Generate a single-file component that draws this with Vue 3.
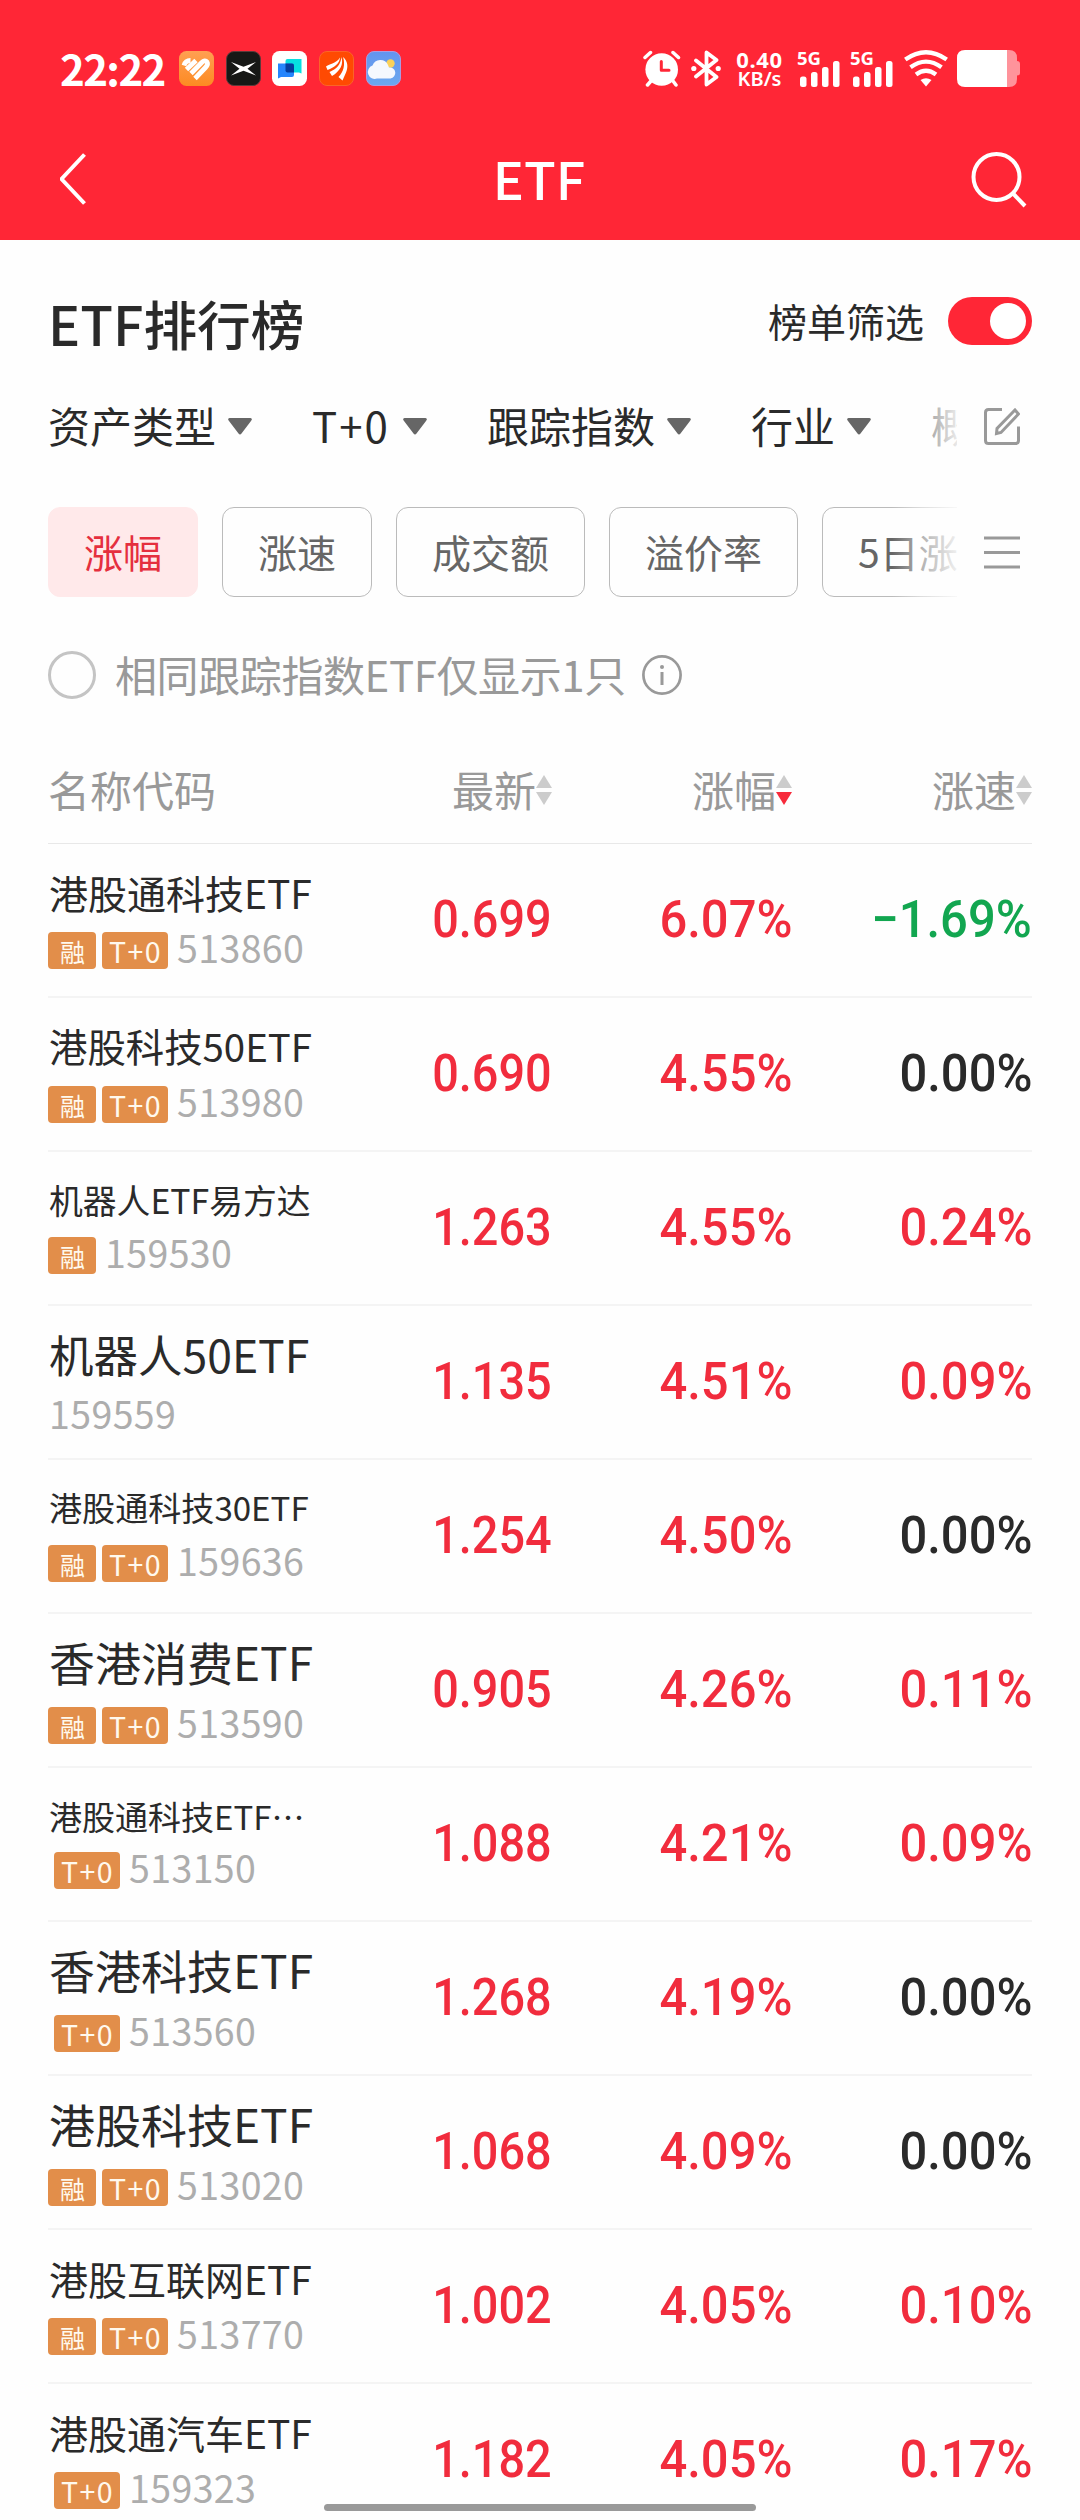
<script setup>
const filters = ['资产类型', 'T+0', '跟踪指数', '行业', '概念']
const chips = ['涨幅', '涨速', '成交额', '溢价率', '5日涨幅']
const columns = [
  { label: '最新', sort: '' },
  { label: '涨幅', sort: 'desc' },
  { label: '涨速', sort: '' },
]
const rows = [
  { name: '港股通科技ETF', size: 39, margin: true, t0: true, code: '513860', price: '0.699', change: '6.07%', speed: '−1.69%' },
  { name: '港股科技50ETF', size: 38.4, margin: true, t0: true, code: '513980', price: '0.690', change: '4.55%', speed: '0.00%' },
  { name: '机器人ETF易方达', size: 33.8, margin: true, t0: false, code: '159530', price: '1.263', change: '4.55%', speed: '0.24%' },
  { name: '机器人50ETF', size: 44.5, margin: false, t0: false, code: '159559', price: '1.135', change: '4.51%', speed: '0.09%' },
  { name: '港股通科技30ETF', size: 33.1, margin: true, t0: true, code: '159636', price: '1.254', change: '4.50%', speed: '0.00%' },
  { name: '香港消费ETF', size: 46, margin: true, t0: true, code: '513590', price: '0.905', change: '4.26%', speed: '0.11%' },
  { name: '港股通科技ETF…', size: 33, margin: false, t0: true, code: '513150', price: '1.088', change: '4.21%', speed: '0.09%' },
  { name: '香港科技ETF', size: 46, margin: false, t0: true, code: '513560', price: '1.268', change: '4.19%', speed: '0.00%' },
  { name: '港股科技ETF', size: 46, margin: true, t0: true, code: '513020', price: '1.068', change: '4.09%', speed: '0.00%' },
  { name: '港股互联网ETF', size: 39, margin: true, t0: true, code: '513770', price: '1.002', change: '4.05%', speed: '0.10%' },
  { name: '港股通汽车ETF', size: 39, margin: false, t0: true, code: '159323', price: '1.182', change: '4.05%', speed: '0.17%' },
]
const tone = (v) => (v.startsWith('−') ? 'down' : v === '0.00%' ? 'flat' : 'up')
</script>

<template>
  <div class="page" lang="zh-CN">
    <header class="top">
      <div class="status">
        <span class="time">22:22</span>
        <div class="apps">
          <svg viewBox="0 0 35 35">
            <defs><linearGradient id="ga" x2="0" y2="1"><stop stop-color="#ffa052" /><stop offset="1" stop-color="#fd8a22" /></linearGradient></defs>
            <rect width="35" height="35" rx="7.5" fill="url(#ga)" />
            <g stroke="#fff" stroke-width="4.8" stroke-linecap="butt" fill="none">
              <path d="M5 14.500Q6.500 9.500 11.500 9.500" /><path d="M7.500 18.500 17 9.500" />
              <path d="M12 22.500 22.500 11.800Q26 8.500 28 11 29.500 13.300 26.500 16.500L16 27.500" />
            </g>
          </svg>
          <svg viewBox="0 0 35 35">
            <rect x=".5" y=".5" width="34" height="34" rx="7.5" fill="#171816" stroke="#5c3a3b" />
            <path d="M5 11 17.500 15.800 30 11 21.500 17.800 30 24.500 17.500 19.800 5 24.500 13.500 17.800Z" fill="#fff" />
          </svg>
          <svg viewBox="0 0 35 35">
            <rect width="35" height="35" rx="7.5" fill="#fff" />
            <path d="M15.500 8H29.500V22.500L27 21.500H15.500Q13.500 21.500 13.500 19.500V10Q13.500 8 15.500 8Z" fill="#07dfe1" />
            <path d="M6 12.500H20Q22 12.500 22 14.500V24Q22 26 20 26H9L6 27.500Z" fill="#2585fc" />
            <path d="M13.500 12.500H20Q22 12.500 22 14.500V21.500H15.500Q13.500 21.500 13.500 19.500Z" fill="#043d9c" />
          </svg>
          <svg viewBox="0 0 35 35">
            <rect x=".5" y=".5" width="34" height="34" rx="7.5" fill="#ff4a02" stroke="#fb6428" />
            <g fill="#fff">
              <path d="M7 15.500C9.500 13 17 13 21 6.500 20.500 12.500 15.500 16.500 8.500 19Z" />
              <path d="M10.500 21C17.500 18 22 13.500 22.300 6 25 13 21 20.500 13 25Z" />
              <path d="M24 6C29.500 10.500 29 17 27 21.500L23.500 29.500 19.500 26C24.500 21 26.500 13.500 24 6Z" />
            </g>
          </svg>
          <svg viewBox="0 0 35 35">
            <defs><linearGradient id="gw" x2="0" y2="1"><stop stop-color="#6394ee" /><stop offset="1" stop-color="#6ca8ef" /></linearGradient></defs>
            <rect x=".5" y=".5" width="34" height="34" rx="7.5" fill="url(#gw)" stroke="#aa9be0" />
            <circle cx="24.500" cy="12.500" r="4.200" fill="#fbd15a" />
            <path d="M11 27.500A6.500 6.500 0 0 1 6.500 14.500 8.300 8.300 0 0 1 22 14L23 16.500A5.500 5.500 0 0 1 24.500 27.500Z" fill="#f5f8fe" />
          </svg>
        </div>
        <div class="sys">
          <svg width="38" height="37" viewBox="0 0 38 37">
            <circle cx="18.700" cy="19.500" r="16.300" fill="#fff" />
            <path d="M2 7.500 7.500 2.500M35.500 7.500 30 2.500M8 31 4.500 35M30 31 33 35" stroke="#fff" stroke-width="3.500" stroke-linecap="round" />
            <path d="M18.300 11.500V20.300H26" fill="none" stroke="#ff2636" stroke-width="3" stroke-linecap="round" stroke-linejoin="round" />
          </svg>
          <svg class="bt" width="30" height="37" viewBox="0 0 30 37">
            <path d="M5 10.500 25.500 27 15.500 34.500V2.500L25.500 10 5 26.500" fill="none" stroke="#fff" stroke-width="3.800" stroke-linejoin="round" stroke-linecap="round" />
            <circle cx="2.800" cy="18.500" r="2.600" fill="#fff" /><circle cx="27.200" cy="18.500" r="2.600" fill="#fff" />
          </svg>
          <div class="speed"><span>0.40</span><span>KB/s</span></div>
          <div v-for="n in 2" :key="n" class="signal">
            <span>5G</span>
            <svg width="40" height="26" viewBox="0 0 40 26" fill="#fff">
              <rect y="15.500" width="6.500" height="10.500" rx="2.500" /><rect x="11" y="11" width="6.500" height="15" rx="2.500" />
              <rect x="22" y="6" width="6.500" height="20" rx="2.500" /><rect x="33" y="0" width="6.500" height="26" rx="2.500" />
            </svg>
          </div>
          <svg class="wifi" width="44" height="37" viewBox="0 0 44 37">
            <g fill="none" stroke="#fff" stroke-width="4.300">
              <path d="M1.300 9.600Q22-5 42.700 9.600" /><path d="M6.500 17.300Q22 6 37.500 17.300" /><path d="M12 24.500Q22 17 32 24.500" />
            </g>
            <path d="M16.500 30Q22 26.500 27.500 30L22 36.500Z" fill="#fff" />
          </svg>
          <svg class="battery" width="63" height="37" viewBox="0 0 63 37">
            <path d="M50 0H52Q60 0 60 8V11Q63 11 63 14V23Q63 25.500 60 25.500V29Q60 37 52 37H50Z" fill="#ff939b" />
            <path d="M50 0H8Q0 0 0 8V29Q0 37 8 37H50Z" fill="#fff" />
          </svg>
        </div>
      </div>
      <nav class="nav">
        <svg width="28" height="52" viewBox="0 0 28 52"><path d="M24.500 1.500 1.500 26 24.500 50.500" fill="none" stroke="#fff" stroke-width="4" /></svg>
        <h1>ETF</h1>
        <svg width="56" height="58" viewBox="0 0 56 58"><circle cx="25.500" cy="27" r="23" fill="none" stroke="#fff" stroke-width="4" /><path d="M41.500 43 54 56" stroke="#fff" stroke-width="4" /></svg>
      </nav>
    </header>

    <section class="heading">
      <h2>ETF排行榜</h2>
      <label><span>榜单筛选</span><i class="toggle"></i></label>
    </section>

    <section class="scroller filters">
      <div class="track">
        <div v-for="f in filters" :key="f" class="filter">
          <span :class="{ latin: f === 'T+0' }">{{ f }}</span>
          <svg width="24" height="17" viewBox="0 0 24 17"><path d="M1.500 0H22.500Q25 .8 23 3L13.500 15.500Q12 17.500 10.500 15.500L1 3Q-1 .8 1.500 0Z" fill="#666" /></svg>
        </div>
      </div>
      <div class="tool">
        <svg width="36" height="37" viewBox="0 0 36 37" fill="none" stroke="#999" stroke-width="3">
          <path d="M18 1.500H4.500Q1.500 1.500 1.500 4.500V32.500Q1.500 35.500 4.500 35.500H31.500Q34.500 35.500 34.500 32.500V18.500" />
          <path d="M31 2 34.500 6 17 24.500 12.500 25.500 13 20.500Z" />
        </svg>
      </div>
    </section>

    <section class="scroller chips">
      <div class="track">
        <button v-for="(c, i) in chips" :key="c" class="chip" :class="{ active: i === 0 }">{{ c }}</button>
      </div>
      <div class="tool">
        <svg width="36" height="33" viewBox="0 0 36 33" stroke="#999" stroke-width="3"><path d="M0 2H36M0 16.500H36M0 31H36" /></svg>
      </div>
    </section>

    <section class="option">
      <i class="radio"></i>
      <span>相同跟踪指数ETF仅显示1只</span>
      <svg width="40" height="40" viewBox="0 0 40 40"><circle cx="20" cy="20" r="18.600" fill="none" stroke="#999" stroke-width="2.700" /><circle cx="20" cy="12" r="2" fill="#999" /><path d="M20 17V30" stroke="#999" stroke-width="3" /></svg>
    </section>

    <section class="table">
      <div class="thead">
        <span class="label">名称代码</span>
        <span v-for="c in columns" :key="c.label" class="col">
          <span class="label">{{ c.label }}</span>
          <svg width="16" height="30" viewBox="0 0 16 30"><path d="M8 0 16 13H0Z" fill="#ccc" /><path d="M8 30 16 17H0Z" :fill="c.sort === 'desc' ? '#f72a3b' : '#ccc'" /></svg>
        </span>
      </div>
      <div v-for="r in rows" :key="r.code" class="row">
        <div class="first" :style="{ '--fs': r.size + 'px' }">
          <div class="name">{{ r.name }}</div>
          <div class="meta">
            <span v-if="r.margin" class="tag rong">融</span>
            <span v-if="r.t0" class="tag t0">T+0</span>
            <span class="code" :class="{ alone: !r.margin && !r.t0 }">{{ r.code }}</span>
          </div>
        </div>
        <div class="num price up"><span>{{ r.price }}</span></div>
        <div class="num up"><span>{{ r.change }}</span></div>
        <div class="num" :class="tone(r.speed)"><span>{{ r.speed }}</span></div>
      </div>
    </section>
    <div class="home"></div>
  </div>
</template>

<style>
body { background: #fff; }
</style>

<style scoped>
* { box-sizing: border-box; }
.page {
  position: relative;
  width: 1080px;
  height: 2520px;
  overflow: hidden;
  background: #fefefe;
  color: #2a2a2a;
  font-family: "Noto Sans CJK SC", sans-serif;
}
svg { display: block; flex: none; }
.top { height: 240px; background: #ff2636; color: #fff; }
.status { display: flex; height: 120px; padding: 50px 60px 0; align-items: flex-start; }
.time { width: 119px; margin-top: -4px; font-size: 42px; line-height: 43px; font-weight: 700; letter-spacing: -1.6px; }
.apps { display: flex; gap: 11.7px; margin-top: 1px; }
.apps svg { width: 35px; height: 35px; }
.sys { display: flex; margin-left: auto; align-items: flex-start; }
.bt { margin-left: 9.5px; }
.speed { display: flex; flex-direction: column; width: 58px; margin-left: 10px; text-align: center; font: 700 22px/19px "Noto Sans", sans-serif; white-space: nowrap; }
.speed span:first-child { letter-spacing: .7px; }
.speed span:last-child { font-size: 20px; font-weight: 600; }
.signal { width: 40px; margin-left: 11.5px; }
.signal + .signal { margin-left: 13px; }
.signal span { display: block; height: 11px; margin-left: -3px; font: 700 18.5px/15px "Noto Sans", sans-serif; }
.wifi { margin-left: 10.5px; }
.battery { margin-left: 9.5px; }
.nav { display: grid; grid-template-columns: 100px 1fr 100px; height: 120px; padding: 0 53px 2px 60px; align-items: center; }
.nav > svg:last-child { justify-self: end; }
h1 { margin: 0 9px 3px 0; text-align: center; font-size: 52px; line-height: 60px; font-weight: 500; }

.heading { display: flex; height: 132px; padding: 0 48px; justify-content: space-between; }
h2 { margin: 48px 0 0; font-size: 53.7px; line-height: 70px; font-weight: 500; }
label { display: flex; height: 48px; margin-top: 57px; align-items: center; gap: 24px; font-size: 39px; line-height: 48px; }
label span { margin-bottom: 3px; }
.toggle { width: 84px; height: 48px; padding: 6px; border-radius: 24px; background: #ff2636; }
.toggle::after { content: ""; display: block; width: 36px; height: 36px; margin-left: auto; border-radius: 50%; background: #fff; }

.scroller { position: relative; display: flex; padding-left: 48px; overflow: hidden; }
.track { display: flex; flex: none; width: 909px; overflow: hidden; }
.scroller::after { content: ""; position: absolute; left: 892px; top: 0; width: 65px; height: 100%; background: linear-gradient(90deg, #fefefe00, #fefefe80 45%, #fefefee6); }
.tool { display: flex; width: 120px; padding-left: 27px; align-items: center; }
.filters { height: 108px; }
.filters .track { gap: 60px; }
.filter { display: flex; flex: none; align-items: center; gap: 12px; font-size: 42px; }
.filter span { margin-bottom: 3px; }
.latin { width: 79px; letter-spacing: 2px; }
.chips { height: 90px; margin-top: 27px; }
.chips .track { gap: 24px; }
.chip { flex: none; height: 90px; padding: 0 35px 2px; border: 1px solid #bbb; border-radius: 12px; background: none; color: #666; font: 39px/86px "Noto Sans CJK SC", sans-serif; }
.chip.active { border-color: #ffe9ea; background: #ffe9ea; color: #e52f3e; }

.option { display: flex; height: 48px; margin-top: 54px; padding-left: 48px; align-items: center; color: #999; font-size: 42px; line-height: 48px; }
.option span { width: 527px; margin: 0 0 3px 19px; letter-spacing: -.4px; }
.radio { width: 48px; height: 48px; border: 3px solid #c4c4c4; border-radius: 50%; }

.table { padding: 0 48px; }
.thead, .row { display: grid; grid-template-columns: 264px repeat(3, 240px); }
.thead { height: 145px; padding-top: 38px; border-bottom: 1px solid #e8e8e8; color: #999; font-size: 42px; line-height: 103px; }
.col { display: flex; justify-content: flex-end; height: 106px; }
.col svg { margin-top: 38px; }
.row { height: 154px; border-bottom: 2px solid #f4f4f4; }
.first { padding-top: calc(48px - var(--fs) * .65); }
.name { height: calc(var(--fs) * 1.3); padding-left: 1px; font-size: var(--fs); line-height: calc(var(--fs) * 1.3); white-space: nowrap; }
.meta { display: flex; height: 37px; margin-top: 15px; }
.tag { height: 37px; border-radius: 4px; background: #e28e4a; color: #fff9ee; text-align: center; }
.rong { width: 48px; padding-left: 1px; font-size: 25px; line-height: 38px; }
.t0 { width: 66px; margin-left: 6px; padding-left: 1px; font-size: 28.5px; line-height: 37px; letter-spacing: 1.5px; }
.code { margin-left: 9px; color: #adadad; font-size: 37.5px; line-height: 30px; font-weight: 400; letter-spacing: .4px; }
.code.alone { margin-left: 1px; }
.num { display: flex; justify-content: flex-end; font: 500 52px/151px Roboto, sans-serif; }
.num span { transform: scaleX(.94); transform-origin: right; }
.price span { transform: scaleX(.9); }
.up { color: #f12c3d; }
.down { color: #12a650; }
.flat { color: #2a2a2a; }
.home { position: absolute; left: 324px; top: 2504px; width: 432px; height: 7px; border-radius: 4px; background: #999; }
</style>
